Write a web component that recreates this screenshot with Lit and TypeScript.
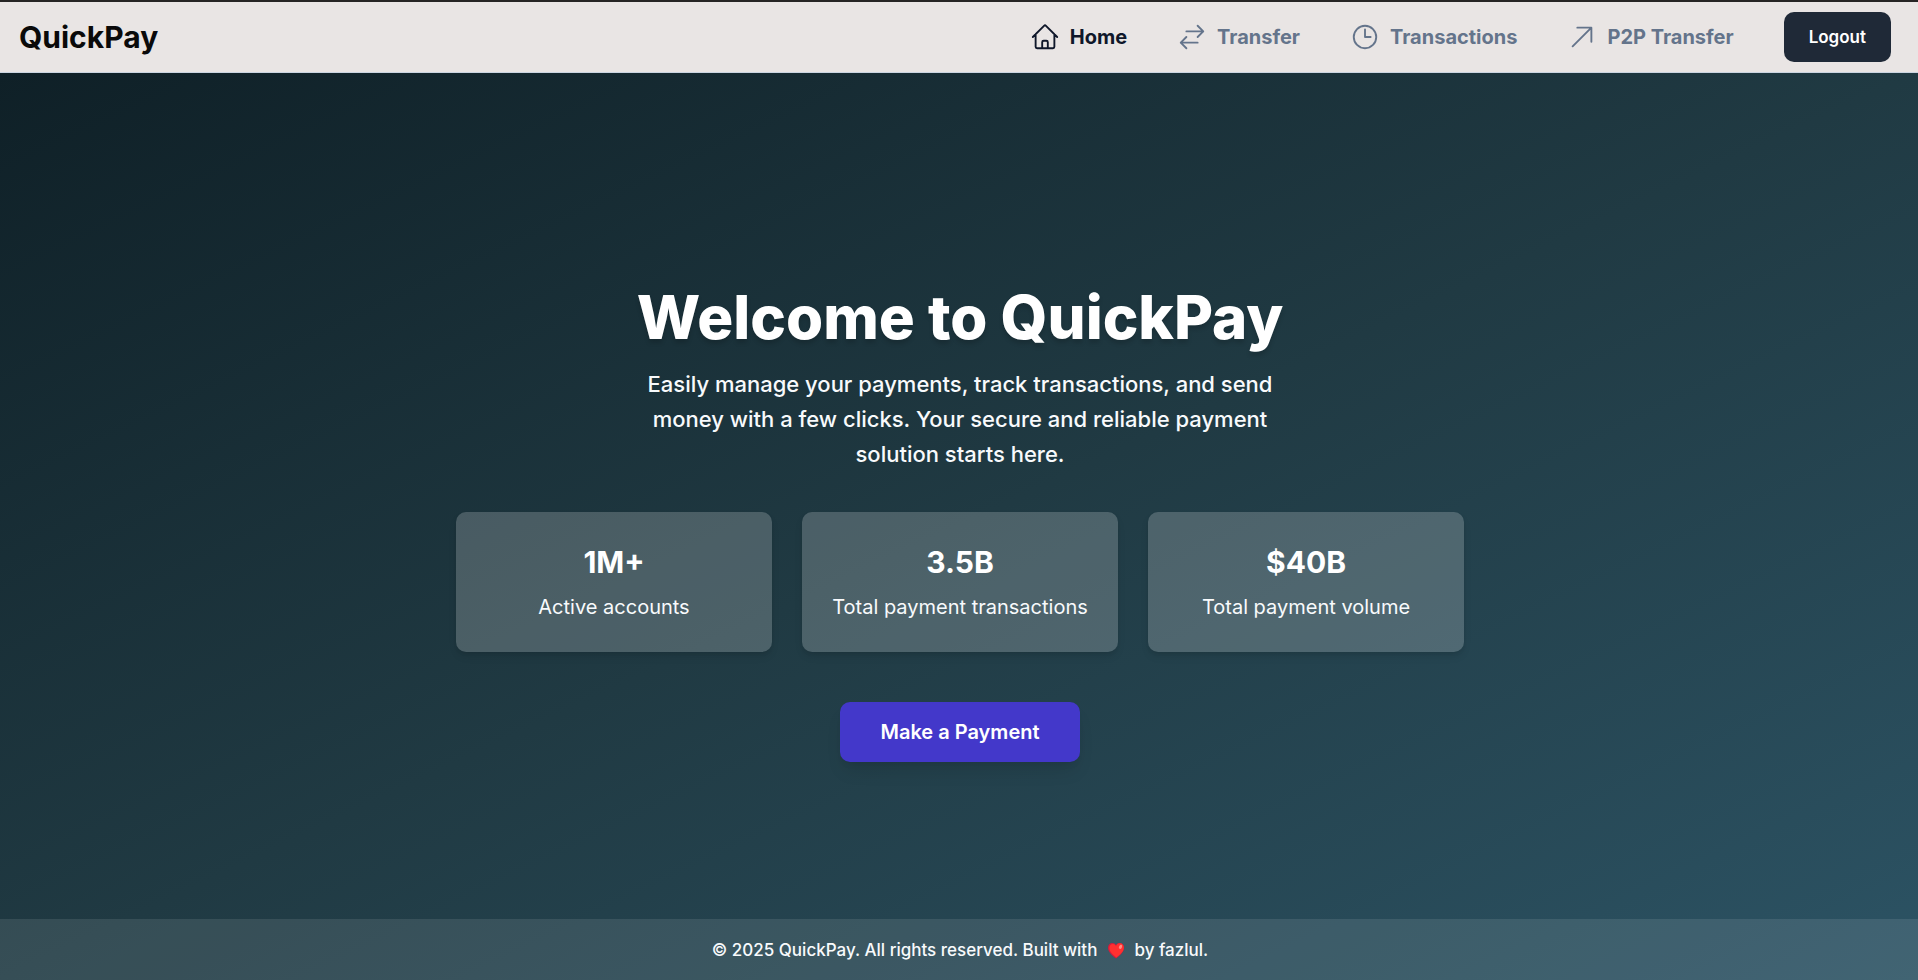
import { LitElement, html, css, svg } from "lit";
import { customElement } from "lit/decorators.js";
import { classMap } from "lit/directives/class-map.js";

const icons = {
  home: svg`<path d="m2.25 12 8.954-8.955c.44-.439 1.152-.439 1.591 0L21.75 12M4.5 9.75v10.125c0 .621.504 1.125 1.125 1.125H9.75v-4.875c0-.621.504-1.125 1.125-1.125h2.25c.621 0 1.125.504 1.125 1.125V21h4.125c.621 0 1.125-.504 1.125-1.125V9.75M8.25 21h8.25"/>`,
  transfer: svg`<path d="M7.5 21 3 16.5m0 0L7.5 12M3 16.5h13.5m0-13.5L21 7.5m0 0L16.5 12M21 7.5H7.5"/>`,
  clock: svg`<path d="M12 6v6h4.5m4.5 0a9 9 0 1 1-18 0 9 9 0 0 1 18 0Z"/>`,
  arrow: svg`<path d="m4.5 19.5 15-15m0 0H8.25m11.25 0v11.25"/>`,
};

const links = [
  { label: "Home", icon: icons.home, active: true },
  { label: "Transfer", icon: icons.transfer, active: false },
  { label: "Transactions", icon: icons.clock, active: false },
  { label: "P2P Transfer", icon: icons.arrow, active: false },
];

const stats = [
  { value: "1M+", label: "Active accounts" },
  { value: "3.5B", label: "Total payment transactions" },
  { value: "$40B", label: "Total payment volume" },
];

@customElement("app-root")
export class AppRoot extends LitElement {
  static styles = css`
    :host {
      display: flex;
      flex-direction: column;
      min-height: 100vh;
      box-sizing: border-box;
      font-family: Inter, sans-serif;
      color: #fff;
      background: #e9e5e4;
    }
    * {
      box-sizing: border-box;
    }
    h1,
    p,
    dl,
    dt,
    dd {
      margin: 0;
    }
    .bar {
      display: flex;
      align-items: center;
      justify-content: space-between;
      padding: 10px 27px 10px 19px;
      border-top: 2px solid #262424;
      border-bottom: 1px solid #cbd5e1;
      background: #e9e5e4;
    }
    .brand {
      color: #0a0a0a;
      font-size: 30px;
      line-height: 40px;
      font-weight: 700;
      text-decoration: none;
    }
    .nav {
      display: flex;
      align-items: center;
      gap: 50px;
    }
    .link {
      display: flex;
      align-items: center;
      gap: 10px;
      color: #64748b;
      font-size: 20px;
      line-height: 30px;
      font-weight: 700;
      text-decoration: none;
    }
    .active {
      color: #0f172a;
    }
    .icon {
      width: 30px;
      height: 30px;
      fill: none;
      stroke: currentColor;
      stroke-width: 1.5;
      stroke-linecap: round;
      stroke-linejoin: round;
    }
    .button {
      border: 0;
      border-radius: 10px;
      color: #fff;
      font-family: inherit;
      font-weight: 600;
      cursor: pointer;
    }
    .logout {
      height: 50px;
      padding: 0 25px;
      background: #1f2937;
      font-size: 17px;
      line-height: 25px;
    }
    .page {
      flex: 1;
      display: flex;
      flex-direction: column;
      background: linear-gradient(to bottom right, #0f2027, #203a43, #2c5364);
    }
    .hero {
      flex: 1;
      display: flex;
      flex-direction: column;
      align-items: center;
      justify-content: center;
      padding: 76px 20px 20px 22px;
      text-align: center;
    }
    .title {
      font-size: 60px;
      line-height: 60px;
      font-weight: 800;
      text-shadow: 0 4px 4px rgba(0, 0, 0, 0.15);
    }
    .lead {
      max-width: 680px;
      margin-top: 20px;
      font-size: 22px;
      font-weight: 500;
      line-height: 35px;
      color: #f8fafc;
    }
    .stats {
      display: grid;
      grid-template-columns: repeat(3, 1fr);
      gap: 30px;
      width: 100%;
      max-width: 1008px;
      margin: 40px 0 50px;
    }
    .card {
      display: flex;
      flex-direction: column;
      gap: 10px;
      padding: 30px 20px;
      border-radius: 10px;
      background: rgba(255, 255, 255, 0.2);
      box-shadow: 0 5px 8px -1px rgba(0, 0, 0, 0.1), 0 2px 5px -2px rgba(0, 0, 0, 0.1);
    }
    .value {
      font-size: 30px;
      line-height: 40px;
      font-weight: 700;
    }
    .label {
      font-size: 20px;
      line-height: 30px;
      color: #f8fafc;
    }
    .cta {
      height: 60px;
      padding: 0 40px;
      background: #4338ca;
      font-size: 20px;
      line-height: 30px;
      box-shadow: 0 12px 18px -4px rgba(0, 0, 0, 0.1), 0 5px 8px -5px rgba(0, 0, 0, 0.1);
    }
    .footer {
      padding: 19px 20px 17px 22px;
      background: rgba(255, 255, 255, 0.1);
      color: #f8fafc;
      font-size: 17px;
      font-weight: 500;
      line-height: 25px;
      text-align: center;
    }
    .heart {
      width: 18px;
      height: 17px;
      margin: 0 5px;
      vertical-align: -3px;
    }
  `;

  render() {
    return html`
      <header class="bar">
        <a class="brand" href="#">QuickPay</a>
        <nav class="nav">
          ${links.map(
            (l) => html`<a class=${classMap({ link: true, active: l.active })} href="#">
              <svg class="icon" viewBox="0 0 24 24" aria-hidden="true">${l.icon}</svg>
              <span>${l.label}</span>
            </a>`
          )}
          <button class="button logout" type="button">Logout</button>
        </nav>
      </header>
      <div class="page">
        <main class="hero">
          <h1 class="title">Welcome to QuickPay</h1>
          <p class="lead">
            Easily manage your payments, track transactions, and send money with a few clicks. Your
            secure and reliable payment solution starts here.
          </p>
          <dl class="stats">
            ${stats.map(
              (s) => html`<div class="card">
                <dt class="value">${s.value}</dt>
                <dd class="label">${s.label}</dd>
              </div>`
            )}
          </dl>
          <button class="button cta" type="button">Make a Payment</button>
        </main>
        <footer class="footer">
          © 2025 QuickPay. All rights reserved. Built with
          <svg class="heart" viewBox="0 0 18 17" role="img" aria-label="love">
            <path
              fill="#d81b3c"
              d="M9 16.5C6 14.2 1 10.500 1 5.800 1 3 3 1 5.300 1 7 1 8.300 1.900 9 3.300 9.700 1.900 11 1 12.700 1 15 1 17 3 17 5.800c0 4.700-5 8.400-8 10.700Z"
            />
            <path
              fill="#ff3030"
              d="M9.500 15.500C7 13.500 2.300 10 2.300 6 2.300 3.500 4 2 6 2c1.500 0 2.500 1 3 2.300C9.700 2.500 11 1.300 12.800 1.300 15 1.300 16.800 3 16.800 5.800c0 4.200-4.500 7.500-7.300 9.700Z"
            />
            <ellipse cx="13.500" cy="4.800" rx="1.500" ry="2.200" fill="#ff8a80" transform="rotate(25 13.500 4.800)" />
          </svg>
          by fazlul.
        </footer>
      </div>
    `;
  }
}
